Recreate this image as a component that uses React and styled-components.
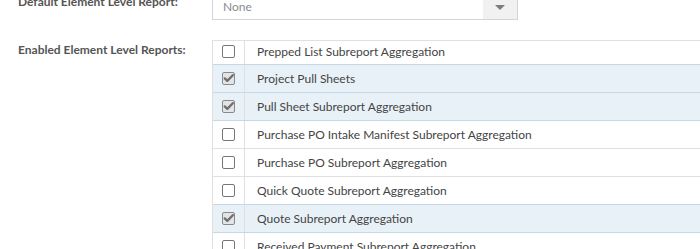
import React from 'react';
import styled, { createGlobalStyle } from 'styled-components';

const GlobalStyle = createGlobalStyle`
  html, body {
    margin: 0;
    padding: 0;
    background: #fff;
    overflow: hidden;
  }
  body {
    font-family: Lato, "Open Sans", sans-serif;
  }
`;

const REPORTS = [
  { name: 'Prepped List Subreport Aggregation', checked: false },
  { name: 'Project Pull Sheets', checked: true },
  { name: 'Pull Sheet Subreport Aggregation', checked: true },
  { name: 'Purchase PO Intake Manifest Subreport Aggregation', checked: false },
  { name: 'Purchase PO Subreport Aggregation', checked: false },
  { name: 'Quick Quote Subreport Aggregation', checked: false },
  { name: 'Quote Subreport Aggregation', checked: true },
  { name: 'Received Payment Subreport Aggregation', checked: false },
];

const Form = styled.div`
  margin-top: -8px;
  display: flex;
  flex-direction: column;
  gap: 20px;
  width: 900px;
`;

const Field = styled.div`
  display: grid;
  grid-template-columns: 212px 1fr;
  align-items: start;
`;

const Label = styled.div`
  padding: 2px 0 0 18px;
  font-size: 12px;
  line-height: 16px;
  font-weight: 700;
  color: #555;
`;

const Select = styled.div`
  display: flex;
  width: 306px;
  height: 28px;
  box-sizing: border-box;
  border: 1px solid #d4d4d4;
  background: #fff;
`;

const SelectValue = styled.div`
  flex: 1;
  display: flex;
  align-items: center;
  padding-left: 10px;
  font-size: 12px;
  color: #8a8a8a;
`;

const SelectArrow = styled.div`
  width: 34px;
  background: #f1f1f1;
  display: flex;
  align-items: center;
  justify-content: center;
  padding-top: 2px;
  box-sizing: border-box;

  &::after {
    content: '';
    border-left: 5px solid transparent;
    border-right: 5px solid transparent;
    border-top: 5px solid #7c7c7c;
  }
`;

const Table = styled.div`
  width: 560px;
  border-top: 1px solid #e0e0e0;
  border-left: 1px solid #e0e0e0;
`;

const Row = styled.div`
  display: grid;
  grid-template-columns: 32px 1fr;
  height: ${p => (p.first ? 24 : 28)}px;
  box-sizing: border-box;
  background: ${p => (p.checked ? '#e9f1f8' : '#fff')};
  border-bottom: 1px solid ${p => (p.checked || p.beforeChecked ? '#c6d8e2' : '#e0e0e0')};
`;

const CheckCell = styled.div`
  display: flex;
  align-items: center;
  justify-content: center;
  padding-bottom: ${p => (p.first ? 3 : 0)}px;
  border-right: 1px solid #e0e0e0;
`;

const NameCell = styled.div`
  display: flex;
  align-items: center;
  padding: 0 0 ${p => (p.first ? 3 : 0)}px 12px;
  font-size: 12px;
  color: #444;
  white-space: nowrap;
`;

const Box = styled.span`
  display: inline-flex;
  align-items: center;
  justify-content: center;
  width: 13px;
  height: 13px;
  box-sizing: border-box;
  border: 1px solid ${p => (p.checked ? '#8a8a8a' : '#777')};
  border-radius: 2px;
  background: ${p => (p.checked ? '#e2e4e6' : '#fff')};
`;

const Checkbox = ({ checked }) => (
  <Box checked={checked}>
    {checked && (
      <svg width="11" height="11" viewBox="0 0 11 11">
        <path
          d="M1.8 5.4 L4.3 7.9 L9.8 2.2"
          fill="none"
          stroke="#6f6f6f"
          strokeWidth="2.3"
          strokeLinecap="round"
          strokeLinejoin="round"
        />
      </svg>
    )}
  </Box>
);

export default function App() {
  return (
    <>
      <GlobalStyle />
      <Form>
        <Field>
          <Label>Default Element Level Report:</Label>
          <Select>
            <SelectValue>None</SelectValue>
            <SelectArrow />
          </Select>
        </Field>
        <Field>
          <Label>Enabled Element Level Reports:</Label>
          <Table>
            {REPORTS.map((r, i) => (
              <Row
                key={r.name}
                first={i === 0}
                checked={r.checked}
                beforeChecked={REPORTS[i + 1] && REPORTS[i + 1].checked}
              >
                <CheckCell first={i === 0}>
                  <Checkbox checked={r.checked} />
                </CheckCell>
                <NameCell first={i === 0}>{r.name}</NameCell>
              </Row>
            ))}
          </Table>
        </Field>
      </Form>
    </>
  );
}
